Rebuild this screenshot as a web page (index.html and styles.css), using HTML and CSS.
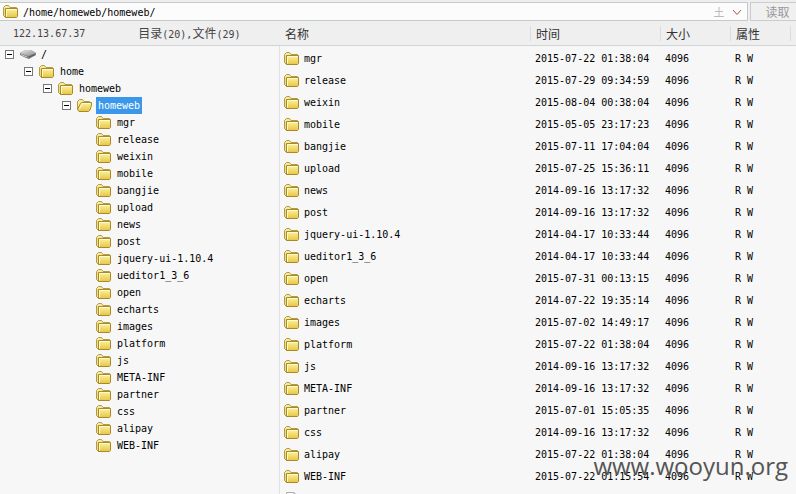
FILE: index.html
```
<!DOCTYPE html>
<html lang="zh">
	<head>
		<meta charset="utf-8">
		<title>/home/homeweb/homeweb/</title>
		<link rel="stylesheet" href="styles.css">
	</head>
	<body>
	<svg class="defs" aria-hidden="true">
		<defs>
			<linearGradient id="gold" x1="0" y1="0" x2="0" y2="1">
				<stop offset="0" stop-color="#fbf2a0"/>
				<stop offset="1" stop-color="#e8c544"/>
			</linearGradient>
			<linearGradient id="metal" x1="0" y1="0" x2="1" y2="1">
				<stop offset="0" stop-color="#e8e8e8"/>
				<stop offset="1" stop-color="#8a8a8a"/>
			</linearGradient>
		</defs>
		<symbol id="folder" viewBox="0 0 16 14">
			<path d="M.5 10.500V2.500L2.500 .5H5.500L7 2.500H13.500V5" fill="#f6e9a0" stroke="#b39a45"/>
			<path d="M.5 3V10.500L2.500 12.500V4" fill="#f0dd80" stroke="#b39a45"/>
			<path d="M2.500 3.500H14.500V11.500L13.500 12.500H2.500Z" fill="url(#gold)" stroke="#a98a2a"/>
			<path d="M3.500 11.500V4.500H13.500" fill="none" stroke="#fffbd0"/>
		</symbol>
		<symbol id="folder-open" viewBox="0 0 16 14">
			<path d="M.5 10.500V2.500L2.500 .5H5.500L7 2.500H12.500V5" fill="#f6e9a0" stroke="#b39a45"/>
			<path d="M.5 10.500L3.500 4.500L5 3.500H14.500V6L13 11L11.500 12.500H2Z" fill="url(#gold)" stroke="#a98a2a"/>
			<path d="M2.500 10L5 4.500H13" fill="none" stroke="#fffbd0"/>
		</symbol>
		<symbol id="disk" viewBox="0 0 16 14">
			<path d="M0 5L5 2H11L16 5V7L9 11L6 10L0 7Z" fill="#808080"/>
			<path d="M0 5L5 2H11L16 5L8 8Z" fill="url(#metal)"/>
			<path d="M1 6.500L7 9" stroke="#ccc" fill="none"/>
			<path d="M9 9L15 6.500" stroke="#555" fill="none"/>
		</symbol>
		<symbol id="file" viewBox="0 0 16 14">
			<path d="M2.500 13.500V.5H10L13.500 4V13.500Z" fill="#fff" stroke="#aaa"/>
			<path d="M10 .5V4H13.500" fill="none" stroke="#aaa"/>
		</symbol>
	</svg>

	<form class="bar">
		<div class="address">
			<svg class="icon"><use href="#folder"/></svg>
			<input class="path" type="text" aria-label="路径" value="/home/homeweb/homeweb/">
			<svg class="arrow" viewBox="0 0 10 10"><path d="M5 0V9M1 4.500H9M0 9.500H10" fill="none" stroke="#bbb"/></svg>
			<svg class="arrow" viewBox="0 0 10 10"><path d="M1 3L5 7.500L9 3" fill="none" stroke="#b5524a"/></svg>
		</div>
		<button class="read" type="button">读取</button>
	</form>

	<div class="main">
		<div class="side">
			<div class="info">
				<span class="host">122.13.67.37</span>
				<span><span class="cn">目录</span>(20),<span class="cn">文件</span>(29)</span>
			</div>
			<ul class="tree">
				<li>
					<div class="node"><button class="toggle" aria-label="折叠"></button><svg class="icon"><use href="#disk"/></svg><span class="name">/</span></div>
					<ul>
						<li>
							<div class="node"><button class="toggle" aria-label="折叠"></button><svg class="icon"><use href="#folder"/></svg><span class="name">home</span></div>
							<ul>
								<li>
									<div class="node"><button class="toggle" aria-label="折叠"></button><svg class="icon"><use href="#folder"/></svg><span class="name">homeweb</span></div>
									<ul>
										<li>
											<div class="node"><button class="toggle" aria-label="折叠"></button><svg class="icon"><use href="#folder-open"/></svg><span class="name selected">homeweb</span></div>
											<ul class="leaves" id="leaves"></ul>
										</li>
									</ul>
								</li>
							</ul>
						</li>
					</ul>
				</li>
			</ul>
		</div>
		<div class="files">
			<table class="list">
				<colgroup><col><col class="c-time"><col class="c-size"><col class="c-attr"><col class="c-end"></colgroup>
				<thead>
					<tr><th>名称</th><th>时间</th><th>大小</th><th>属性</th><th></th></tr>
				</thead>
				<tbody id="rows"></tbody>
			</table>
		</div>
	</div>
	<div class="watermark">www.wooyun.org</div>

	<script src="files.js"></script>
	</body>
</html>
```
FILE: styles.css
```
* {
	box-sizing: border-box;
}
body {
	margin: 0;
	height: 100vh;
	overflow: hidden;
	display: flex;
	flex-direction: column;
	position: relative;
	background-color: #f7f7f7;
	color: #000;
	font: 10px "DejaVu Sans Mono", "Liberation Mono", "Noto Sans CJK SC", monospace;
}
ul {
	list-style: none;
	margin: 0;
	padding: 0;
}
.defs {
	position: absolute;
	width: 0;
	height: 0;
}
.icon {
	width: 16px;
	height: 14px;
	flex: none;
}

/* address bar */
.bar {
	display: flex;
	flex: none;
	gap: 2px;
	height: 21px;
	padding-top: 2px;
	background-color: #eee;
}
.address {
	flex: 1;
	display: flex;
	align-items: center;
	gap: 8px;
	padding: 0 5px 0 3px;
	border: 1px solid #c5c9c9;
	border-left: 0;
	background-color: #fcfcfc;
}
.path {
	flex: 1;
	min-width: 0;
	margin-left: -4px;
	padding: 2px 0 0;
	border: 0;
	outline: 0;
	background: none;
	color: #000;
	font: inherit;
}
.arrow {
	width: 10px;
	height: 10px;
}
.read {
	width: 46px;
	padding: 0 0 0 8px;
	border: 1px solid #ccc;
	border-right: 0;
	background-color: #f0f0f0;
	color: #999;
	font: 12px "Noto Sans CJK SC", sans-serif;
	line-height: 16px;
}

.main {
	flex: 1;
	display: flex;
	min-height: 0;
}
.side {
	width: 280px;
	flex: none;
	display: flex;
	flex-direction: column;
}
.info {
	display: flex;
	align-items: center;
	gap: 53px;
	height: 25px;
	padding: 2px 0 0 13px;
	border-bottom: 1px solid #d0d3d3;
	background-color: #efefef;
	color: #444;
	line-height: 22px;
}
.cn {
	font-family: "Noto Sans CJK SC", sans-serif;
	font-size: 12px;
}

/* folder tree */
.tree {
	flex: 1;
	border-right: 1px solid #dfe2e2;
}
.tree ul {
	padding-left: 19px;
}
.node {
	display: flex;
	align-items: center;
	height: 17px;
	padding-left: 5px;
}
.toggle {
	width: 9px;
	height: 9px;
	margin-right: 6px;
	padding: 0;
	border: 1px solid #777;
	background: linear-gradient(#000, #000) center / 5px 1px no-repeat #fff;
}
.leaves .node {
	padding-left: 20px;
}
.name {
	margin-left: 3px;
	padding: 0 2px;
	line-height: 17px;
}
.selected {
	background-color: #3b97ea;
	color: #fff;
}

/* file list */
.files {
	flex: 1;
	min-width: 0;
	overflow: hidden;
}
.list {
	width: 100%;
	table-layout: fixed;
	border-collapse: separate;
	border-spacing: 0;
}
.c-time {
	width: 130px;
}
.c-size {
	width: 70px;
}
.c-attr {
	width: 60px;
}
.c-end {
	width: 5px;
}
.list th {
	height: 25px;
	padding: 2px 5px 0;
	border-bottom: 1px solid #d0d3d3;
	background: linear-gradient(#dcdcdc, #dcdcdc) right center / 1px 15px no-repeat #efefef;
	color: #333;
	font: 12px "Noto Sans CJK SC", sans-serif;
	line-height: 22px;
	text-align: left;
}
.list th:last-child {
	padding: 0;
	background: #efefef;
}
.list td {
	height: 22px;
	padding: 4px 4px 0;
	line-height: 14px;
	white-space: nowrap;
}
.list td:last-child {
	padding: 0;
}
.file {
	display: flex;
	align-items: center;
	gap: 4px;
}

.watermark {
	position: absolute;
	right: 8px;
	bottom: 10px;
	color: #555;
	font: 24px "Open Sans", sans-serif;
	line-height: 36px;
	pointer-events: none;
}
```
FILE: files.js
```
var files=[
	["mgr","2015-07-22 01:38:04"],
	["release","2015-07-29 09:34:59"],
	["weixin","2015-08-04 00:38:04"],
	["mobile","2015-05-05 23:17:23"],
	["bangjie","2015-07-11 17:04:04"],
	["upload","2015-07-25 15:36:11"],
	["news","2014-09-16 13:17:32"],
	["post","2014-09-16 13:17:32"],
	["jquery-ui-1.10.4","2014-04-17 10:33:44"],
	["ueditor1_3_6","2014-04-17 10:33:44"],
	["open","2015-07-31 00:13:15"],
	["echarts","2014-07-22 19:35:14"],
	["images","2015-07-02 14:49:17"],
	["platform","2015-07-22 01:38:04"],
	["js","2014-09-16 13:17:32"],
	["META-INF","2014-09-16 13:17:32"],
	["partner","2015-07-01 15:05:35"],
	["css","2014-09-16 13:17:32"],
	["alipay","2015-07-22 01:38:04"],
	["WEB-INF","2015-07-22 01:15:54"]
];

var icon='<svg class="icon"><use href="#folder"/></svg>';
var leaves="";
var rows="";

for(var i=0;i<files.length;i++){
	leaves+='<li class="node">'+icon+'<span class="name">'+files[i][0]+'</span></li>';
	rows+='<tr><td><div class="file">'+icon+files[i][0]+'</div></td><td>'+files[i][1]+'</td><td>4096</td><td>R W</td><td></td></tr>';
}
//first plain file comes after the folders
rows+='<tr><td><div class="file"><svg class="icon"><use href="#file"/></svg></div></td><td></td><td></td><td></td><td></td></tr>';

document.getElementById("leaves").innerHTML=leaves;
document.getElementById("rows").innerHTML=rows;
```
